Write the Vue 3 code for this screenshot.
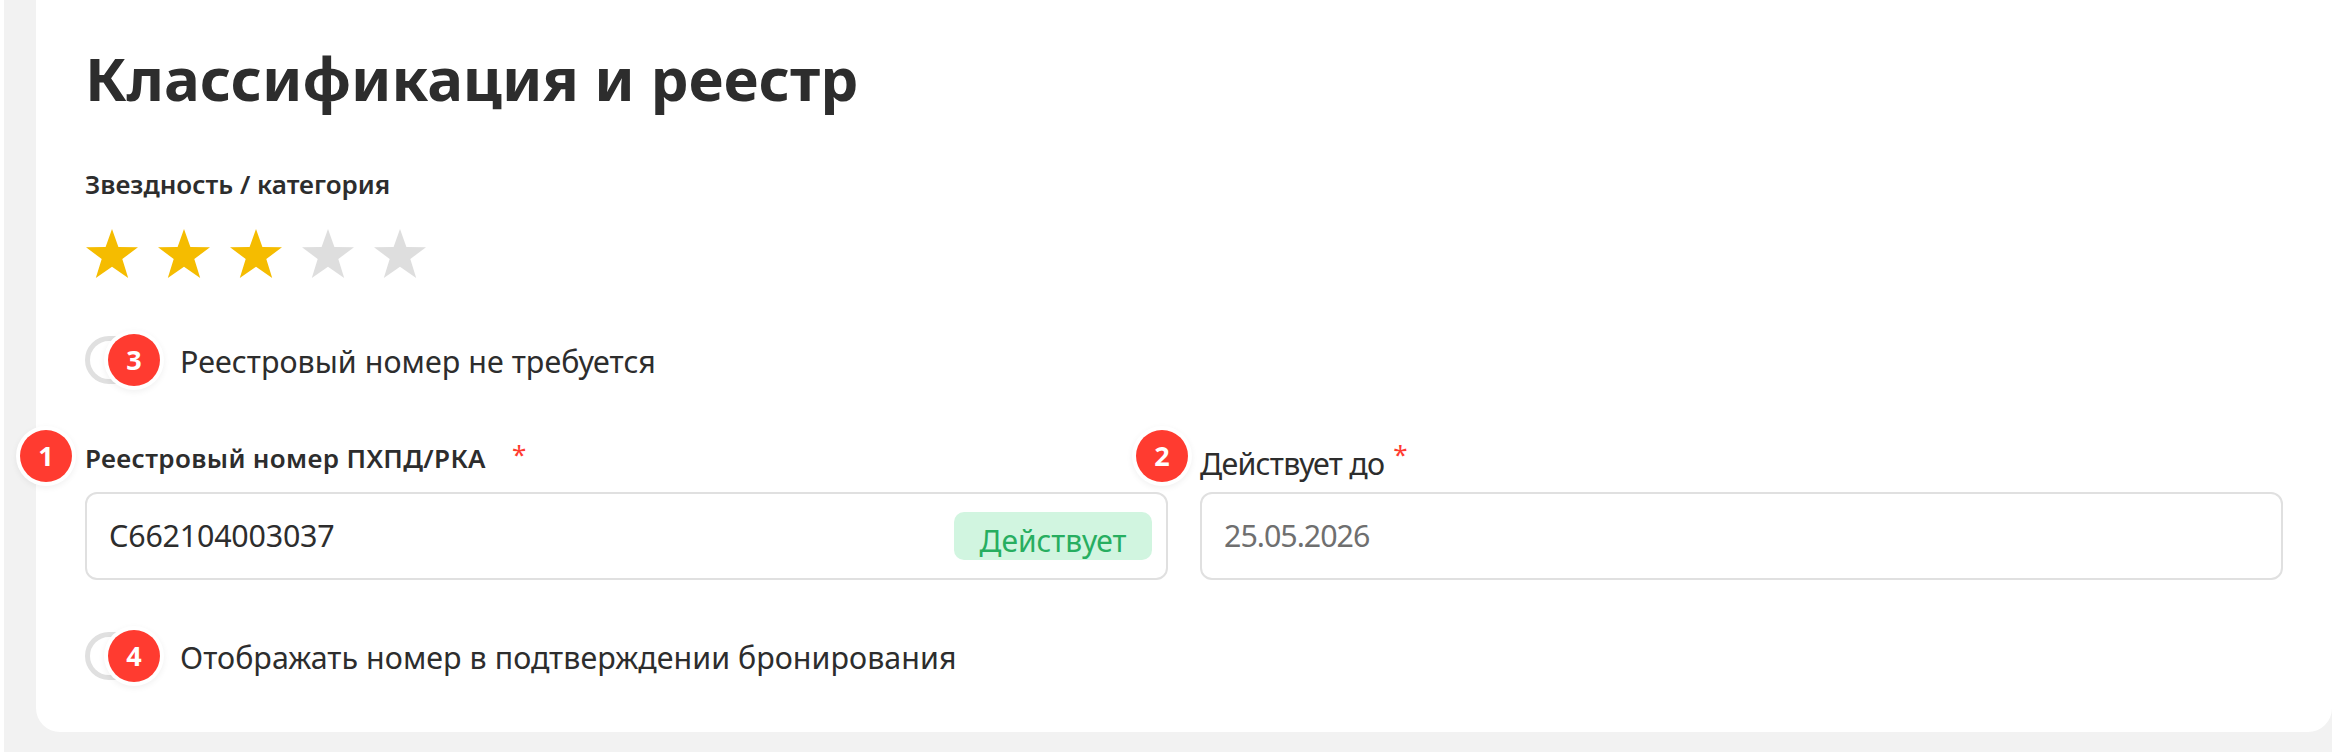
<script setup>
const stars = [true, true, true, false, false]
</script>

<template>
  <div class="page">
    <section class="card">
      <h1 class="title">Классификация и реестр</h1>
      <div class="group-label">Звездность / категория</div>
      <div class="stars">
        <svg v-for="(on, i) in stars" :key="i" class="star" :class="{ on }" viewBox="0 0 52 49">
          <polygon points="26,0 32.4,18 52,18.3 36.3,30 42.2,49 26,37.8 9.8,49 15.7,30 0,18.3 19.6,18" />
        </svg>
      </div>

      <div class="toggle-row first">
        <span class="toggle"><span class="marker on-toggle">3</span></span>
        <span class="toggle-text">Реестровый номер не требуется</span>
      </div>

      <div class="fields">
        <div class="field">
          <div class="label-row">
            <span class="marker at-left">1</span>
            <span class="label strong">Реестровый номер ПХПД/РКА</span>
            <span class="req wide">*</span>
          </div>
          <div class="input">
            <span class="value">С662104003037</span>
            <span class="status">Действует</span>
          </div>
        </div>
        <div class="field">
          <div class="label-row">
            <span class="marker at-left-2">2</span>
            <span class="label plain">Действует до</span>
            <span class="req">*</span>
          </div>
          <div class="input">
            <span class="value muted">25.05.2026</span>
          </div>
        </div>
      </div>

      <div class="toggle-row last">
        <span class="toggle"><span class="marker on-toggle">4</span></span>
        <span class="toggle-text">Отображать номер в подтверждении бронирования</span>
      </div>
    </section>
  </div>
</template>

<style scoped>
.page {
  margin-left: 4px;
  height: 752px;
  box-sizing: border-box;
  padding: 0 0 20px 32px;
  background: #f2f2f2;
  font-family: "Noto Sans", "Open Sans", sans-serif;
  color: #2d2d2d;
}
.card {
  height: 732px;
  box-sizing: border-box;
  padding: 38px 49px 0;
  background: #fff;
  border-radius: 0 0 24px 24px;
}
.title {
  margin: 0;
  font-size: 60px;
  line-height: 80px;
  font-weight: 700;
  color: #2d2d2d;
}
.group-label {
  margin-top: 49px;
  font-size: 26px;
  line-height: 34px;
  font-weight: 600;
}
.stars {
  display: flex;
  gap: 20px;
  margin-top: 28px;
  padding-left: 1px;
}
.star {
  width: 52px;
  height: 49px;
  fill: #dedede;
}
.star.on {
  fill: #f5bc00;
}
.toggle-row {
  display: flex;
  align-items: center;
  gap: 35px;
}
.toggle-row.first {
  margin-top: 58px;
}
.toggle-row.last {
  margin-top: 52px;
}
.toggle {
  position: relative;
  flex: none;
  width: 60px;
  height: 48px;
  box-sizing: border-box;
  border: 5px solid #e0e0e0;
  border-radius: 24px;
  background: #fff;
}
.toggle-text {
  padding-top: 4px;
  font-size: 30.4px;
  line-height: 40px;
  letter-spacing: 0.05px;
  color: #2d2d2d;
}
.marker {
  position: absolute;
  width: 52px;
  height: 52px;
  border-radius: 50%;
  background: #ff3b30;
  color: #fff;
  font-size: 27px;
  line-height: 52px;
  font-weight: 700;
  text-align: center;
  box-shadow: 0 0 0 4px #fff, 0 2px 6px 4px rgba(0, 0, 0, 0.06);
}
.on-toggle {
  left: 18px;
  top: -7px;
}
.fields {
  display: grid;
  grid-template-columns: 1fr 1fr;
  gap: 32px;
  margin-top: 52px;
}
.label-row {
  position: relative;
  display: flex;
  align-items: flex-start;
  height: 56px;
}
.at-left {
  left: -65px;
  top: -6px;
}
.at-left-2 {
  left: -64px;
  top: -6px;
}
.label.strong {
  font-size: 26px;
  line-height: 32px;
  font-weight: 600;
  letter-spacing: 0.36px;
  margin-top: 6px;
}
.label.plain {
  font-size: 30.4px;
  line-height: 40px;
  letter-spacing: -0.75px;
  margin-top: 8px;
}
.req {
  color: #ff3b30;
  font-size: 26px;
  line-height: 32px;
  margin-left: 9px;
  margin-top: 2px;
}
.req.wide {
  margin-left: 26px;
  margin-top: 2px;
}
.input {
  display: flex;
  align-items: center;
  justify-content: space-between;
  height: 88px;
  box-sizing: border-box;
  padding: 0 14px 0 22px;
  border: 2px solid #e0e0e0;
  border-radius: 12px;
  background: #fff;
}
.value {
  font-size: 30.4px;
  line-height: 40px;
  letter-spacing: -0.2px;
  color: #2d2d2d;
}
.value.muted {
  letter-spacing: -1px;
  color: #6f6f6f;
}
.status {
  width: 198px;
  height: 48px;
  border-radius: 10px;
  background: #d1f5e0;
  color: #27ae60;
  font-size: 30px;
  line-height: 39px;
  padding-top: 9px;
  box-sizing: border-box;
  text-align: center;
}
</style>
